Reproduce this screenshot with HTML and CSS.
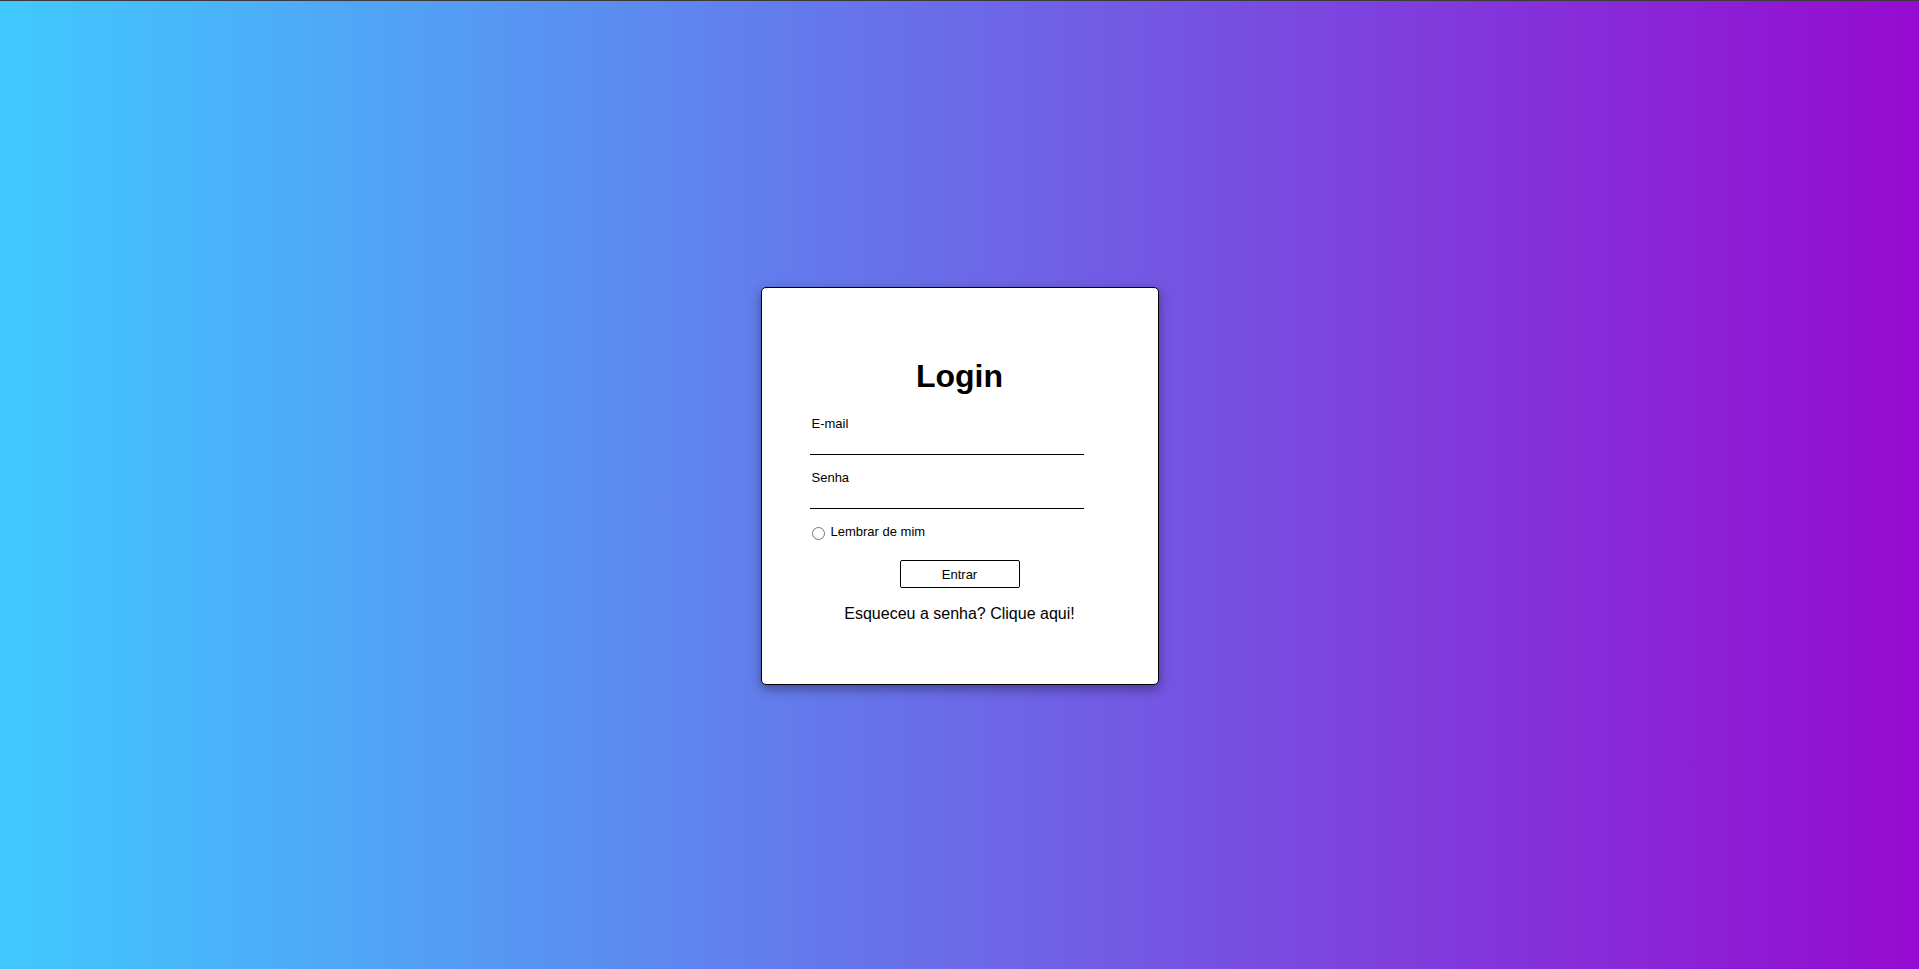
FILE: index.html
```html
<!DOCTYPE html>
<html lang="pt-BR">
<head>
<meta charset="utf-8">
<title>Login</title>
<link rel="stylesheet" href="styles.css">
</head>
<body>
<main class="card">
  <h1 class="title">Login</h1>
  <form class="form">
    <div class="fields">
      <label class="field-label" for="email">E-mail</label>
      <input class="field-input" id="email" type="email">
      <label class="field-label field-label--gap" for="senha">Senha</label>
      <input class="field-input" id="senha" type="password">
      <label class="remember">
        <input class="remember-radio" type="radio">
        <span class="remember-text">Lembrar de mim</span>
      </label>
    </div>
    <div class="actions">
      <button class="submit" type="button">Entrar</button>
    </div>
    <p class="forgot"><a class="forgot-link" href="#">Esqueceu a senha? Clique aqui!</a></p>
  </form>
</main>
</body>
</html>
```

FILE: styles.css
```css
* {
  box-sizing: border-box;
}

html, body {
  margin: 0;
  padding: 0;
}

body {
  height: 100vh;
  border-top: 1px solid #3a3a3a;
  background: linear-gradient(to right, #40c9ff 0%, #960bd0 100%);
  font-family: "Liberation Sans", Arial, sans-serif;
  color: #000;
  display: flex;
  align-items: center;
  justify-content: center;
}

.card {
  width: 398px;
  height: 398px;
  margin-top: 2px;
  background: #fff;
  border: 1px solid #000;
  border-radius: 5px;
  box-shadow: 0 4px 12px rgba(0, 0, 0, 0.38);
  padding-top: 70px;
}

.title {
  margin: 0;
  font-size: 32px;
  line-height: 37px;
  font-weight: bold;
  text-align: center;
}

.form {
  margin: 21px 0 0;
}

.fields {
  margin-left: 48px;
  width: 274px;
  display: flex;
  flex-direction: column;
}

.field-label {
  display: block;
  font-size: 13px;
  line-height: 15px;
  padding-left: 2px;
}

.field-label--gap {
  margin-top: 15px;
}

.field-input {
  display: block;
  width: 274px;
  height: 24px;
  border: none;
  border-bottom: 1px solid #000;
  background: transparent;
  outline: none;
  padding: 0 2px;
  font-family: "Liberation Sans", Arial, sans-serif;
  font-size: 13px;
}

.remember {
  display: flex;
  align-items: flex-start;
  margin-top: 15px;
  padding-left: 2px;
}

.remember-radio {
  width: 13px;
  height: 13px;
  margin: 3px 6px 0 0;
}

.remember-text {
  font-size: 13px;
  line-height: 15px;
}

.actions {
  display: flex;
  justify-content: center;
  margin-top: 20px;
}

.submit {
  width: 120px;
  height: 28px;
  background: #fff;
  border: 1px solid #000;
  border-radius: 2px;
  font-family: "Liberation Sans", Arial, sans-serif;
  font-size: 13px;
  color: #000;
  padding: 0;
}

.forgot {
  margin: 17px 0 0;
  font-size: 16px;
  line-height: 18px;
  text-align: center;
}

.forgot-link {
  color: #000;
  text-decoration: none;
}
```
